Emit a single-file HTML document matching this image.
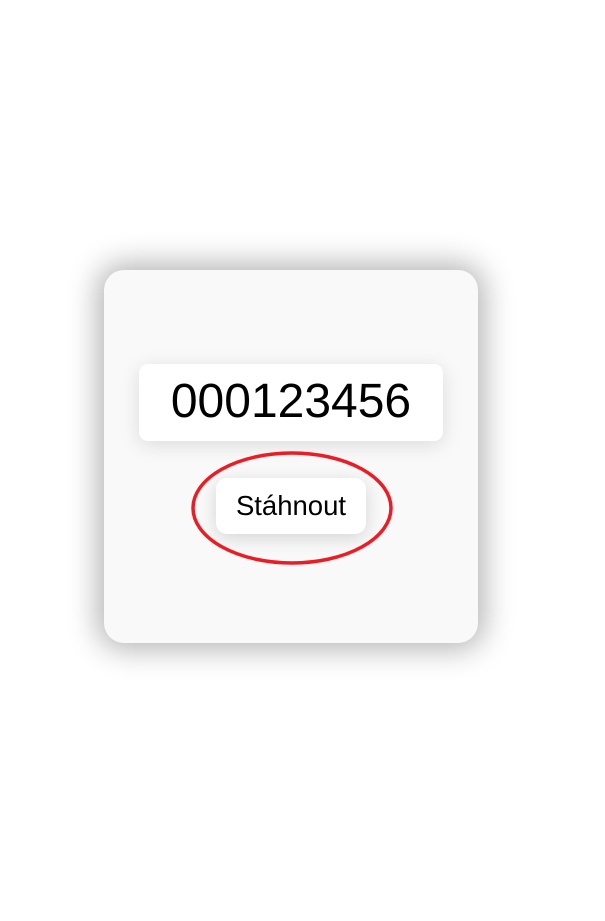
<!DOCTYPE html>
<html><head><meta charset="utf-8"><style>
html,body{margin:0;padding:0;width:605px;height:921px;background:#fff;overflow:hidden;font-family:"Liberation Sans",Arial,sans-serif;}
.card{position:absolute;left:104px;top:270px;width:374px;height:373px;background:#f9f9f9;border-radius:20px;box-shadow:0 0 30px 6px rgba(0,0,0,0.3);}
.num{position:absolute;left:139px;top:364px;width:304px;height:77px;background:#fff;border-radius:9px;box-shadow:0 4px 20px rgba(0,0,0,0.12);text-align:center;line-height:76px;font-size:48px;color:#000;}
.btn{position:absolute;left:216px;top:478px;width:150px;height:56px;background:#fff;border-radius:11px;box-shadow:0 4px 18px rgba(0,0,0,0.15);text-align:center;line-height:56px;font-size:27.5px;color:#000;}
svg{position:absolute;left:0;top:0;}
</style></head><body>
<div class="card"></div>
<div class="num">000123456</div>
<div class="btn">Stáhnout</div>
<svg width="605" height="921"><ellipse cx="292" cy="508" rx="99" ry="55" fill="none" stroke="#ed1c24" stroke-width="3.5"/></svg>
</body></html>
